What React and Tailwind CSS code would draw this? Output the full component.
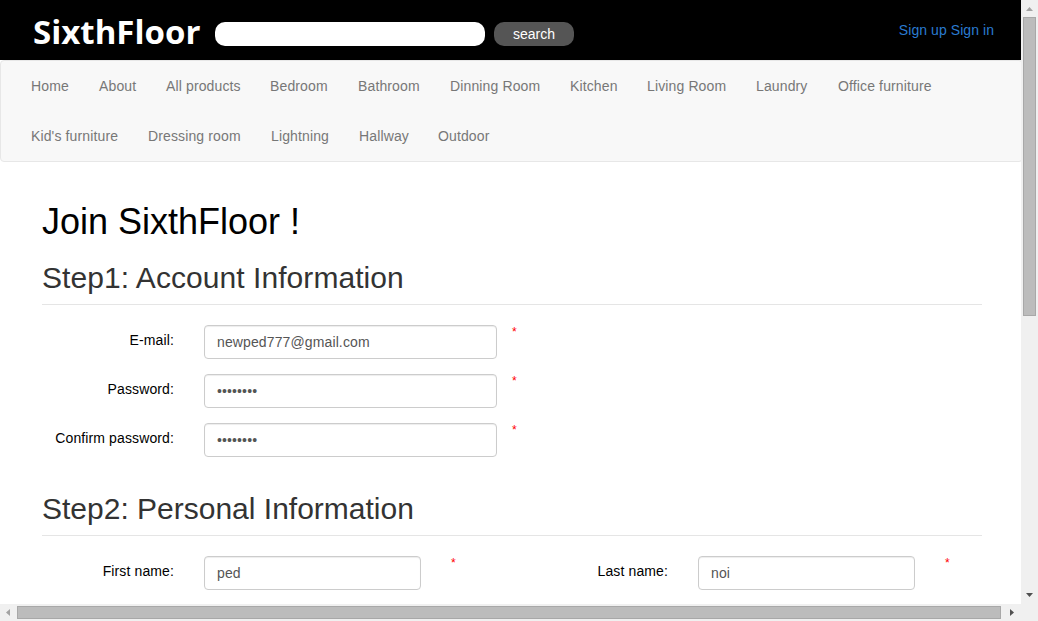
const NAV = [
  ["Home", "w-[68px]"],
  ["About", "w-[67px]"],
  ["All products", "w-[104px]"],
  ["Bedroom", "w-[88px]"],
  ["Bathroom", "w-[92px]"],
  ["Dinning Room", "w-[120px]"],
  ["Kitchen", "w-[77px]"],
  ["Living Room", "w-[109px]"],
  ["Laundry", "w-[82px]"],
  ["Office furniture", "w-[124px]"],
  ["Kid's furniture", "w-[117px]"],
  ["Dressing room", "w-[123px]"],
  ["Lightning", "w-[88px]"],
  ["Hallway", "w-[79px]"],
  ["Outdoor", "w-[82px]"],
];

function Header() {
  return (
    <header className="flex h-[60px] shrink-0 items-start bg-black">
      <div className="ml-[33px] mt-[10px] w-[182px] whitespace-nowrap font-['Open_Sans',sans-serif] text-[33px] font-bold leading-[44px] text-white">SixthFloor</div>
      <input aria-label="Search" className="mt-[22px] h-6 w-[270px] rounded-[10px] bg-white px-3 text-black outline-none" />
      <button className="ml-[9px] mt-[22px] h-6 w-20 rounded-[10px] bg-[#555] text-sm leading-6 text-white">search</button>
      <div className="ml-auto mr-[27px] mt-5 flex gap-1 leading-5 tracking-[0.06px] text-[#2a7bd0]">
        <a>Sign up</a>
        <a>Sign in</a>
      </div>
    </header>
  );
}

function Nav() {
  return (
    <nav className="w-[1023px] shrink-0 rounded border border-[#e7e7e7] bg-[#f8f8f8] px-[15px]">
      <ul className="flex flex-wrap">
        {NAV.map(([item, width]) => (
          <li key={item} className={`${width} whitespace-nowrap py-[15px] pl-[15px] leading-5 tracking-[0.13px] text-[#777]`}>{item}</li>
        ))}
      </ul>
    </nav>
  );
}

function Field({ label, value, type = "text", wide = false }) {
  return (
    <div className="flex">
      <label className="w-[132px] whitespace-nowrap pt-[5px] text-right leading-5 tracking-[0.12px] text-black">{label}</label>
      <input
        type={type}
        defaultValue={value}
        className={`${wide ? "mr-[15px] w-[293px]" : "mr-[30px] w-[217px]"} ml-[30px] h-[34px] rounded border border-[#ccc] bg-white px-3 text-sm tracking-[0.12px] text-[#555] shadow-[inset_0_1px_1px_rgba(0,0,0,0.075)] outline-none`}
      />
      <span className="h-4 text-[12px] leading-[14px] text-[#ff0000]">*</span>
    </div>
  );
}

function Heading({ children }) {
  return <h2 className="h-[44px] border-b border-[#e5e5e5] text-[30px] leading-[33px] text-[#333]">{children}</h2>;
}

function VerticalScrollbar() {
  return (
    <div className="flex w-[17px] flex-col items-center bg-[#f0f0f0]">
      <svg className="h-[17px] w-[17px] shrink-0" viewBox="0 0 17 17"><path d="M5 11h7L8.5 7z" fill="#a3a3a3" /></svg>
      <div className="h-[299px] w-[13px] border border-[#a8a8a8] bg-[#bcbcbc]" />
      <svg className="mt-auto h-[17px] w-[17px] shrink-0" viewBox="0 0 17 17"><path d="M5 6h7L8.5 10z" fill="#505050" /></svg>
    </div>
  );
}

function HorizontalScrollbar() {
  return (
    <div className="flex h-[17px] items-center bg-[#f0f0f0]">
      <svg className="h-[17px] w-[17px] shrink-0" viewBox="0 0 17 17"><path d="M10 5v7L6 8.5z" fill="#a3a3a3" /></svg>
      <div className="h-[13px] w-[984px] border border-[#a8a8a8] bg-[#bcbcbc]" />
      <svg className="ml-[2px] h-[17px] w-[17px] shrink-0" viewBox="0 0 17 17"><path d="M7 5v7L11 8.5z" fill="#505050" /></svg>
    </div>
  );
}

export default function App() {
  return (
    <div className="flex h-[621px] w-[1038px] flex-col overflow-hidden bg-white font-['Liberation_Sans',Arial,sans-serif] text-sm">
      <div className="flex h-[604px]">
        <div className="flex w-[1021px] flex-col overflow-hidden">
          <Header />
          <Nav />
          <main className="ml-[42px] mt-[40px] w-[940px]">
            <h1 className="text-[36px] leading-[40px] text-black">Join SixthFloor !</h1>
            <div className="mt-[19px] tracking-[0.06px]">
              <Heading>Step1: Account Information</Heading>
            </div>
            <div className="mt-5 flex flex-col gap-[15px]">
              <Field label="E-mail:" value="newped777@gmail.com" wide />
              <Field label="Password:" value="password" type="password" wide />
              <Field label="Confirm password:" value="password" type="password" wide />
            </div>
            <div className="mt-[35px]">
              <Heading>Step2: Personal Information</Heading>
            </div>
            <div className="mt-5 grid grid-cols-[494px_446px]">
              <Field label="First name:" value="ped" />
              <Field label="Last name:" value="noi" />
            </div>
          </main>
        </div>
        <VerticalScrollbar />
      </div>
      <HorizontalScrollbar />
    </div>
  );
}
